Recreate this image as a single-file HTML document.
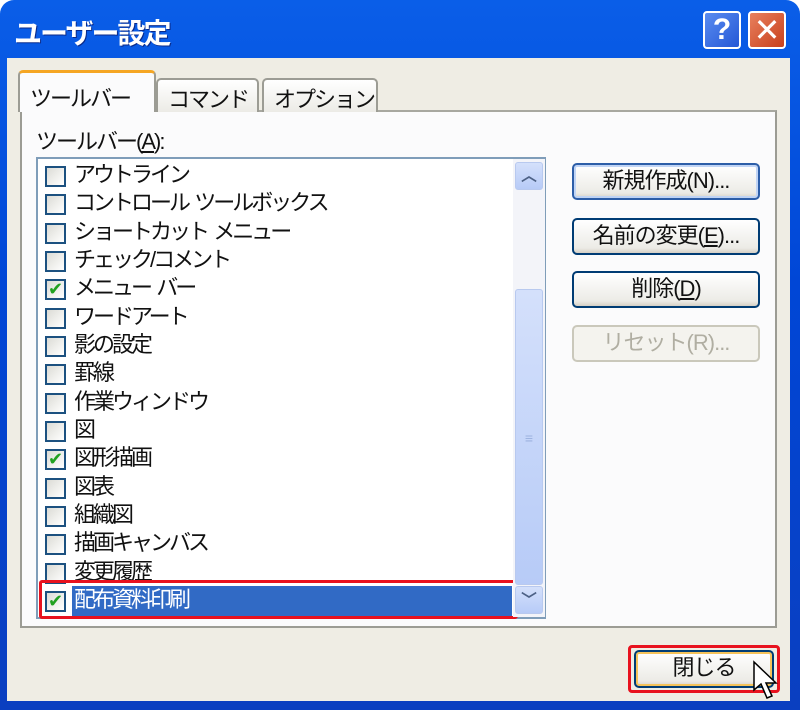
<!DOCTYPE html>
<html><head><meta charset="utf-8"><style>
*{margin:0;padding:0;box-sizing:border-box}
body{width:800px;height:710px;overflow:hidden;background:#fff;font-family:"Liberation Sans","Noto Sans CJK JP",sans-serif;position:relative}
.a{position:absolute}
.win{left:0;top:0;width:800px;height:710px;background:linear-gradient(#0a5ee8,#0046d6 40%,#0a3fc0);border-radius:14px 14px 0 0}
.title{left:14px;top:12px;color:#fff;font-size:28px;font-weight:bold;text-shadow:1px 1px 0 #0a2a8a;letter-spacing:-2px}
.body{left:7px;top:58px;width:783px;height:643px;background:#efede4}
.panel{left:20px;top:110px;width:757px;height:518px;background:#fbfbfc;border:2px solid #9c9c94;border-top-color:#a8a8a0}
.tab{top:78px;height:34px;background:linear-gradient(#fff,#ecebe6);border:2px solid #9c9c94;border-bottom:none;border-radius:5px 5px 0 0;font-size:22px;letter-spacing:-2px;color:#111;padding:2px 0 0 10px;white-space:nowrap}
.list{left:36px;top:157px;width:510px;height:462px;background:#fff;border:2px solid #7f9db9}
.row{left:5px;height:28px;font-size:22px;letter-spacing:-3px;line-height:28px;color:#111;white-space:pre}
.cb{position:absolute;left:2px;top:4px;width:21px;height:21px;border:2px solid #1c5180;background:linear-gradient(135deg,#dcdcd6,#fff);letter-spacing:0}
.row span{position:absolute;left:31px;top:-1px}
.btn{left:572px;width:188px;height:37px;border:2px solid #003c74;border-radius:5px;background:linear-gradient(#fff,#ecebe6 85%,#d6d0c5);font-size:22px;letter-spacing:-1px;text-align:center;line-height:32px;color:#111;white-space:nowrap}
.sb{left:475px;top:0;width:32px;height:458px;background:#f3f4f9}
.sbb{position:absolute;width:28px;height:28px;left:2px;border:1px solid #b8c9ef;border-radius:3px;background:linear-gradient(#d4e0fb,#b7cbf7);color:#4d6185;font-size:16px;text-align:center;line-height:28px;font-weight:bold}
</style></head><body>
<div class="a win"></div>
<div class="a title">ユーザー設定</div>
<div class="a" style="left:703px;top:11px;width:38px;height:38px;border:2px solid #fff;border-radius:4px;background:linear-gradient(135deg,#5a8cf0,#2457d6);color:#fff;font-size:30px;font-weight:bold;text-align:center;line-height:34px">?</div>
<div class="a" style="left:748px;top:11px;width:38px;height:38px;border:2px solid #fff;border-radius:4px;background:linear-gradient(135deg,#e8805e,#c8401c);color:#fff;font-size:32px;text-align:center;line-height:34px">✕</div>
<div class="a body"></div>
<div class="a panel"></div>
<div class="a tab" style="left:156px;width:103px">コマンド</div>
<div class="a tab" style="left:262px;width:116px">オプション</div>
<div class="a tab" style="left:18px;top:70px;height:42px;width:138px;background:#fbfbfc;border-top:3px solid #f5a623;padding-top:8px">ツールバー</div>
<div class="a" style="left:36px;top:124px;font-size:22px;letter-spacing:-2px;color:#111">ツールバー(<u>A</u>):</div>
<div class="a list">
<div class="a row" style="top:3px"><i class="cb"></i><span>アウトライン</span></div>
<div class="a row" style="top:31px"><i class="cb"></i><span>コントロール  ツールボックス</span></div>
<div class="a row" style="top:60px"><i class="cb"></i><span>ショートカット  メニュー</span></div>
<div class="a row" style="top:88px"><i class="cb"></i><span>チェック/コメント</span></div>
<div class="a row" style="top:116px"><i class="cb" style="color:#21a121;font-size:18px;line-height:17px;text-align:center;font-style:normal">✔</i><span>メニュー  バー</span></div>
<div class="a row" style="top:145px"><i class="cb"></i><span>ワードアート</span></div>
<div class="a row" style="top:173px"><i class="cb"></i><span>影の設定</span></div>
<div class="a row" style="top:201px"><i class="cb"></i><span>罫線</span></div>
<div class="a row" style="top:230px"><i class="cb"></i><span>作業ウィンドウ</span></div>
<div class="a row" style="top:258px"><i class="cb"></i><span>図</span></div>
<div class="a row" style="top:286px"><i class="cb" style="color:#21a121;font-size:18px;line-height:17px;text-align:center;font-style:normal">✔</i><span>図形描画</span></div>
<div class="a row" style="top:315px"><i class="cb"></i><span>図表</span></div>
<div class="a row" style="top:343px"><i class="cb"></i><span>組織図</span></div>
<div class="a row" style="top:371px"><i class="cb"></i><span>描画キャンバス</span></div>
<div class="a row" style="top:400px"><i class="cb"></i><span>変更履歴</span></div>
<div class="a" style="left:34px;top:427px;width:440px;height:30px;background:#316ac5"></div>
<div class="a row" style="top:428px;color:#fff"><i class="cb" style="color:#21a121;font-size:18px;line-height:17px;text-align:center;font-style:normal">✔</i><span>配布資料印刷</span></div>
<div class="a" style="left:1px;top:421px;width:479px;height:39px;border:3px solid #e8121e;border-radius:3px"></div>
<div class="a sb">
<div class="sbb" style="top:3px">︿</div>
<div class="sbb" style="top:130px;height:296px;line-height:296px;font-size:14px;color:#9db3e0">≡</div>
<div class="sbb" style="top:427px">﹀</div>
</div>
</div>
<div class="a btn" style="top:163px;border-color:#2d5ea8;box-shadow:inset 0 0 0 2px #c0d4f5">新規作成(N)...</div>
<div class="a btn" style="top:218px">名前の変更(<u>E</u>)...</div>
<div class="a btn" style="top:271px">削除(<u>D</u>)</div>
<div class="a btn" style="top:325px;border-color:#cac8bb;background:#f4f3ee;color:#b0aea2">リセット(R)...</div>
<div class="a btn" style="left:634px;top:650px;width:140px;height:38px;border-color:#003c74;box-shadow:inset 0 0 0 2px #f5c35a">閉じる</div>
<div class="a" style="left:628px;top:645px;width:152px;height:48px;border:3px solid #e8121e;border-radius:4px"></div>
<svg class="a" style="left:750px;top:660px" width="30" height="45"><path d="M4 2 L4 30 L11 24 L17 38 L22 36 L16 23 L26 23 Z" fill="#fff" stroke="#000" stroke-width="1.5"/></svg>
</body></html>
